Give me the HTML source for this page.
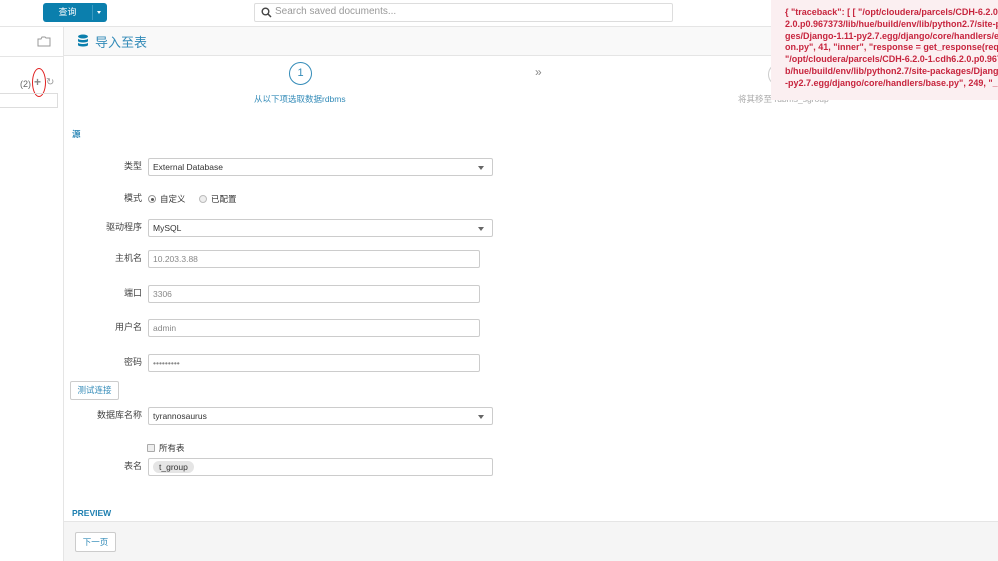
<!DOCTYPE html>
<html><head><meta charset="utf-8"><style>
*{box-sizing:border-box;margin:0;padding:0}
body{width:998px;height:561px;overflow:hidden;background:#fff;font-family:"Liberation Sans","Noto Sans CJK SC",sans-serif;font-size:9px;color:#333;position:relative}
.a{position:absolute}
.lbl{position:absolute;right:856px;text-align:right;font-size:9px;color:#444;width:100px}
.inp{position:absolute;left:148px;height:18px;border:1px solid #ccc;border-radius:2px;font-size:8.5px;padding:0 4px;line-height:16px;color:#333;background:#fff}
.sel:after{content:"";position:absolute;right:8px;top:7px;border:3px solid transparent;border-top:4px solid #666}
.ph{color:#888}
</style></head><body>
<div class="a" style="left:0;top:26px;width:998px;height:1px;background:#e5e5e5"></div>
<div class="a" style="left:43px;top:3px;width:64px;height:19px;background:#0b7fad;border-radius:3px"></div>
<div class="a" style="left:43px;top:3px;width:49px;height:19px;color:#fff;font-size:9px;text-align:center;line-height:19px">查询</div>
<div class="a" style="left:92px;top:5px;width:1px;height:15px;background:#3a9ac2"></div>
<div class="a" style="left:97px;top:11px;border:2.5px solid transparent;border-top:3px solid #fff"></div>
<div class="a" style="left:254px;top:3px;width:419px;height:19px;border:1px solid #ddd;border-radius:2px"></div>
<svg class="a" style="left:261px;top:7px" width="11" height="11"><circle cx="4.5" cy="4.5" r="3.3" fill="none" stroke="#444" stroke-width="1.4"/><line x1="7" y1="7" x2="10" y2="10" stroke="#444" stroke-width="1.5"/></svg>
<div class="a" style="left:275px;top:6px;font-size:10px;color:#999">Search saved documents...</div>
<div class="a" style="left:63px;top:27px;width:935px;height:29px;background:#f9f9f9;border-bottom:1px solid #e5e5e5"></div>
<div class="a" style="left:0;top:56px;width:63px;height:1px;background:#e5e5e5"></div>
<div class="a" style="left:63px;top:27px;width:1px;height:534px;background:#e5e5e5"></div>
<svg class="a" style="left:37px;top:35px" width="14" height="12"><path d="M1 4h3l1-2h3l1 1h4v8H1z" fill="none" stroke="#999"/></svg>
<svg class="a" style="left:77px;top:34px" width="12" height="13"><ellipse cx="6" cy="2.5" rx="5" ry="2" fill="#0b7fad"/><path d="M1 4.5c0 2 10 2 10 0v2.5c0 2-10 2-10 0z M1 8.5c0 2 10 2 10 0V11c0 2-10 2-10 0z" fill="#0b7fad"/></svg>
<div class="a" style="left:95px;top:32px;font-size:13px;color:#338bb8">导入至表</div>
<div class="a" style="left:20px;top:79px;font-size:9px;color:#666">(2)</div>
<div class="a" style="left:34px;top:75px;font-size:12px;font-weight:bold;color:#888">+</div>
<div class="a" style="left:32px;top:68px;width:14px;height:29px;border:1.5px solid #e02020;border-radius:50%"></div>
<div class="a" style="left:46px;top:77px;font-size:10px;color:#999">↻</div>
<div class="a" style="left:-2px;top:93px;width:60px;height:15px;border:1px solid #ddd"></div>
<div class="a" style="left:289px;top:62px;width:23px;height:23px;border:1px solid #338bb8;border-radius:50%;text-align:center;line-height:21px;font-size:11px;color:#338bb8">1</div>
<div class="a" style="left:254px;top:93px;font-size:8.5px;color:#338bb8">从以下项选取数据rdbms</div>
<div class="a" style="left:535px;top:65px;font-size:12px;color:#888">»</div>
<div class="a" style="left:768px;top:63px;width:23px;height:23px;border:1px solid #ccc;border-radius:50%"></div>
<div class="a" style="left:738px;top:93px;font-size:8.5px;color:#aaa">将其移至 rdbms_sgroup</div>
<div class="a" style="left:771px;top:0;width:227px;height:100px;background:#fbeff1;padding:7px 0 0 14px;color:#c7253e;font-size:9px;font-weight:bold;line-height:11.8px;white-space:nowrap;overflow:hidden">{ "traceback": [ [ "/opt/cloudera/parcels/CDH-6.2.0-1.cdh6<br>2.0.p0.967373/lib/hue/build/env/lib/python2.7/site-packa<br>ges/Django-1.11-py2.7.egg/django/core/handlers/excepti<br>on.py", 41, "inner", "response = get_response(request)" ],<br>"/opt/cloudera/parcels/CDH-6.2.0-1.cdh6.2.0.p0.967373/li<br>b/hue/build/env/lib/python2.7/site-packages/Django-1.11<br>-py2.7.egg/django/core/handlers/base.py", 249, "_legacy</div>
<div class="a" style="left:72px;top:128px;font-size:8.5px;color:#338bb8;font-weight:bold">源</div>
<div class="lbl" style="top:159px">类型</div>
<div class="inp sel" style="top:158px;width:345px">External Database</div>
<div class="lbl" style="top:191px">模式</div>
<div class="a" style="left:148px;top:195px;width:8px;height:8px;border:1px solid #999;border-radius:50%"><div style="margin:1.5px;width:3px;height:3px;background:#555;border-radius:50%"></div></div>
<div class="a" style="left:160px;top:193px;font-size:8.5px">自定义</div>
<div class="a" style="left:199px;top:195px;width:8px;height:8px;border:1px solid #bbb;border-radius:50%;background:#eee"></div>
<div class="a" style="left:211px;top:193px;font-size:8.5px">已配置</div>
<div class="lbl" style="top:220px">驱动程序</div>
<div class="inp sel" style="top:219px;width:345px">MySQL</div>
<div class="lbl" style="top:251px">主机名</div>
<div class="inp ph" style="top:250px;width:332px">10.203.3.88</div>
<div class="lbl" style="top:286px">端口</div>
<div class="inp ph" style="top:285px;width:332px">3306</div>
<div class="lbl" style="top:320px">用户名</div>
<div class="inp ph" style="top:319px;width:332px">admin</div>
<div class="lbl" style="top:355px">密码</div>
<div class="inp ph" style="top:354px;width:332px">•••••••••</div>
<div class="a" style="left:70px;top:381px;width:49px;height:19px;border:1px solid #ccc;border-radius:2px;text-align:center;line-height:17px;color:#338bb8;font-size:8.5px">测试连接</div>
<div class="lbl" style="top:408px">数据库名称</div>
<div class="inp sel" style="top:407px;width:345px">tyrannosaurus</div>
<div class="a" style="left:147px;top:444px;width:8px;height:8px;border:1px solid #aaa;background:#eee;border-radius:1px"></div>
<div class="a" style="left:159px;top:442px;font-size:8.5px">所有表</div>
<div class="lbl" style="top:459px">表名</div>
<div class="inp" style="top:458px;width:345px"><span style="display:inline-block;margin-top:2px;background:#e5e5e5;border-radius:7px;padding:0 6px;line-height:12px">t_group</span></div>
<div class="a" style="left:72px;top:508px;font-size:8.5px;color:#1d7fb0;font-weight:bold">PREVIEW</div>
<div class="a" style="left:64px;top:521px;width:934px;height:40px;background:#f5f5f5;border-top:1px solid #e5e5e5"></div>
<div class="a" style="left:75px;top:532px;width:41px;height:20px;border:1px solid #ccc;border-radius:2px;background:#fff;text-align:center;line-height:18px;font-size:8.5px;color:#338bb8">下一页</div>
</body></html>
